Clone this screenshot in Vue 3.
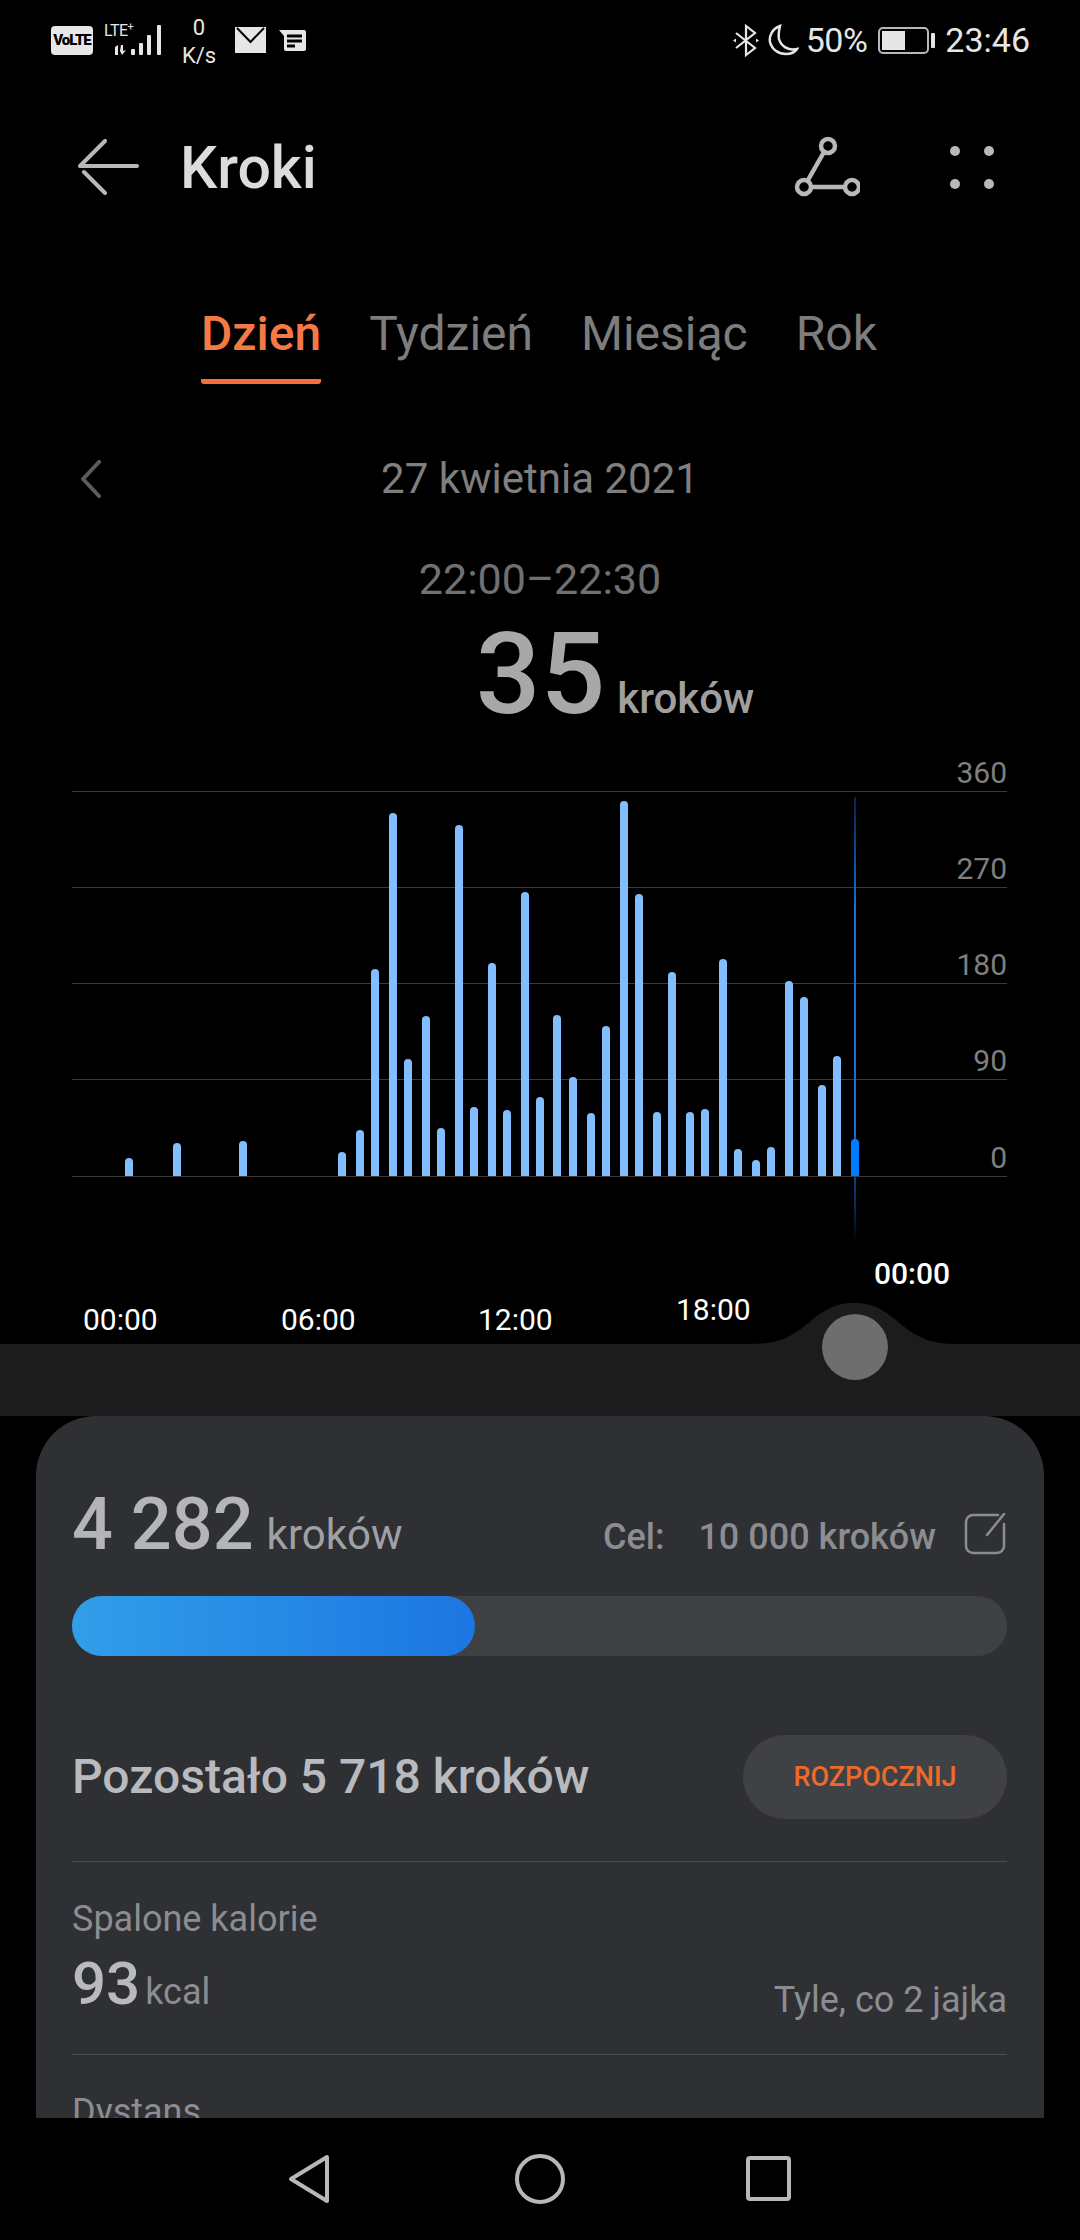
<script setup>
const tabs = ['Dzień', 'Tydzień', 'Miesiąc', 'Rok']

const bars = [
  [129, 18], [177, 33], [243, 35], [342, 24], [360, 46], [375, 207], [393, 363],
  [408, 117], [426, 160], [441, 48], [459, 351], [474, 69], [492, 213], [507, 66],
  [525, 284], [540, 79], [557, 161], [573, 99], [591, 63], [606, 150], [624, 375],
  [639, 282], [657, 64], [672, 204], [690, 64], [705, 67], [723, 217], [738, 27],
  [756, 16], [771, 29], [789, 195], [804, 179], [822, 91], [837, 120],
]

const yLabels = [
  { text: '360', top: 0 },
  { text: '270', top: 96 },
  { text: '180', top: 192 },
  { text: '90', top: 288 },
  { text: '0', top: 385 },
]

const xLabels = [
  { text: '00:00', left: 83, top: 511 },
  { text: '06:00', left: 281, top: 511 },
  { text: '12:00', left: 478, top: 511 },
  { text: '18:00', left: 676, top: 501 },
]
</script>

<template>
  <div class="phone">
    <!-- Status bar -->
    <div class="status">
      <div class="status-left">
        <span class="volte">VoLTE</span>
        <div class="signal">
          <span class="lte">LTE<sup>+</sup></span>
          <svg width="60" height="32" viewBox="0 0 60 32" class="signal-svg">
            <g fill="#e6e6e6">
              <path d="M11 23l3-2v10h-3z" />
              <path d="M17 21h2v6l3-1-4 5-2-4z" />
              <rect x="27" y="25" width="4" height="6" rx="1" />
              <rect x="35" y="19" width="4" height="12" rx="1" />
              <rect x="43" y="11" width="4" height="20" rx="1" />
              <rect x="53" y="1" width="4" height="30" rx="1" />
            </g>
          </svg>
        </div>
        <div class="speed"><span>0</span><span>K/s</span></div>
        <svg width="31" height="26" viewBox="0 0 31 26" class="mail">
          <path fill="#e6e6e6" d="M0 0h31v26H0z" />
          <path fill="none" stroke="#000" stroke-width="2" d="M2 1l13.500 14L29 1" />
        </svg>
        <svg width="28" height="23" viewBox="0 0 28 23" class="msg">
          <path fill="#e6e6e6" d="M0 1h25a2 2 0 0 1 2 2v17a2 2 0 0 1-2 2H7a2 2 0 0 1-2-2V7z" />
          <path stroke="#000" stroke-width="3" d="M8 7h15M8 12h15M8 17h8" />
        </svg>
      </div>
      <div class="status-right">
        <svg width="26" height="33" viewBox="0 0 26 33" fill="none" stroke="#e6e6e6" stroke-width="2.200">
          <path d="M3 9l19 15-9 7V2l9 7L3 24" />
          <path d="M0 16.500l3-2v4zM26 16.500l-3-2v4z" fill="#e6e6e6" stroke="none" />
        </svg>
        <svg width="31" height="32" viewBox="0 0 31 32" class="moon">
          <path fill="none" stroke="#e6e6e6" stroke-width="2.500" d="M12 2C4 5 1 12 2 18c2 8 9 12 16 12 5 0 9-2 11-5-9 2-16-3-18-10-1-5 0-9 1-13z" />
        </svg>
        <span class="pct">50%</span>
        <div class="battery">
          <div class="battery-body"><div class="battery-fill"></div></div>
          <div class="battery-tip"></div>
        </div>
        <span class="time">23:46</span>
      </div>
    </div>

    <!-- App bar -->
    <header class="appbar">
      <svg width="62" height="56" viewBox="0 0 62 56" fill="none" stroke="#b8b8b8" stroke-width="4" stroke-linecap="round" stroke-linejoin="round">
        <path d="M2 27h57M2 27L27 2M6 33l21 21" />
      </svg>
      <h1 class="title">Kroki</h1>
      <svg width="68" height="62" viewBox="0 0 68 62" fill="none" stroke="#b8b8b8" stroke-width="4.500">
        <circle cx="36" cy="10" r="7" />
        <circle cx="12" cy="51" r="7" />
        <circle cx="60" cy="51" r="7" />
        <path d="M32 16L16 44M19 51h34" />
      </svg>
      <div class="more">
        <i></i><i></i><i></i><i></i>
      </div>
    </header>

    <!-- Tabs -->
    <nav class="tabs">
      <div v-for="(t, i) in tabs" :key="t" class="tab" :class="{ active: i === 0 }">{{ t }}</div>
    </nav>

    <!-- Date -->
    <div class="date-row">
      <svg class="date-prev" width="22" height="38" viewBox="0 0 22 38" fill="none" stroke="#5c5c5c" stroke-width="4" stroke-linecap="round" stroke-linejoin="round">
        <path d="M19 2L3 19l16 17" />
      </svg>
      <span>27 kwietnia 2021</span>
    </div>
    <div class="range">22:00–22:30</div>
    <div class="reading"><span class="reading-num">35</span><span class="reading-unit">kroków</span></div>

    <!-- Chart -->
    <section class="chart">
      <div v-for="y in yLabels" :key="y.text" class="grid-line" :style="{ top: y.top + 'px' }"></div>
      <span v-for="y in yLabels" :key="'l' + y.text" class="y-label" :style="{ top: y.top - 36 + 'px' }">{{ y.text }}</span>
      <div class="cursor"></div>
      <div
        v-for="b in bars"
        :key="b[0]"
        class="bar"
        :style="{ left: b[0] - 3.75 + 'px', height: b[1] + 'px' }"
      ></div>
      <div class="bar bar-current"></div>
      <span
        v-for="x in xLabels"
        :key="x.left"
        class="x-label"
        :style="{ left: x.left + 'px', top: x.top + 'px' }"
      >{{ x.text }}</span>
      <span class="x-label x-current">00:00</span>
      <svg class="bump" width="208" height="41" viewBox="0 0 208 41">
        <path fill="#1c1c1c" d="M0 41C30 41 42 34 62 17 80 2 92 0 104 0s24 2 42 17c20 17 32 24 62 24z" />
      </svg>
      <div class="thumb"></div>
    </section>
    <div class="band"></div>

    <!-- Summary card -->
    <main class="viewport">
      <div class="card">
        <div class="totals">
          <span class="total-num">4 282</span>
          <span class="total-unit">kroków</span>
          <span class="goal">Cel:</span>
          <span class="goal goal-value">10 000 kroków</span>
          <svg width="42" height="42" viewBox="0 0 42 42" fill="none" stroke="#8c8d90" stroke-width="2.500" stroke-linecap="round">
            <path d="M34 2H9a7 7 0 0 0-7 7v24a7 7 0 0 0 7 7h24a7 7 0 0 0 7-7V11" />
            <path d="M40 1L23 22" />
          </svg>
        </div>
        <div class="progress"><div class="progress-fill"></div></div>
        <div class="remaining">
          <span>Pozostało 5 718 kroków</span>
          <button class="start">ROZPOCZNIJ</button>
        </div>
        <div class="stat">
          <div class="stat-label">Spalone kalorie</div>
          <div class="stat-row">
            <span class="stat-num">93</span>
            <span class="stat-unit">kcal</span>
            <span class="stat-note">Tyle, co 2 jajka</span>
          </div>
        </div>
        <div class="stat">
          <div class="stat-label">Dystans</div>
        </div>
      </div>
    </main>

    <!-- Navigation bar -->
    <footer class="navbar">
      <svg width="42" height="50" viewBox="0 0 42 50" fill="none" stroke="#b8b8b8" stroke-width="4" stroke-linejoin="round">
        <path d="M39 3v44L3 25z" />
      </svg>
      <svg width="50" height="50" viewBox="0 0 50 50" fill="none" stroke="#b8b8b8" stroke-width="4">
        <circle cx="25" cy="25" r="23" />
      </svg>
      <svg width="46" height="46" viewBox="0 0 46 46" fill="none" stroke="#b8b8b8" stroke-width="4" stroke-linejoin="round">
        <rect x="2" y="2" width="41" height="41" rx="2" />
      </svg>
    </footer>
  </div>
</template>

<style scoped>
.phone {
  width: 1080px;
  height: 2240px;
  background: #000;
  display: flex;
  flex-direction: column;
  overflow: hidden;
  font-family: Roboto, "Liberation Sans", sans-serif;
  color: #b8b8b8;
}

/* status bar */
.status {
  height: 80px;
  flex-shrink: 0;
  display: flex;
  justify-content: space-between;
  align-items: center;
  padding: 0 50px 0 51px;
  color: #e6e6e6;
}
.status-left,
.status-right {
  display: flex;
  align-items: center;
}
.volte {
  width: 42px;
  height: 29px;
  border-radius: 4px;
  background: #e6e6e6;
  color: #000;
  font-size: 15px;
  font-weight: 900;
  line-height: 29px;
  text-align: center;
  letter-spacing: -1px;
}
.signal {
  position: relative;
  width: 60px;
  height: 32px;
  margin-left: 11px;
}
.signal-svg {
  display: block;
}
.lte {
  position: absolute;
  left: 0;
  top: -2px;
  font-size: 16px;
  line-height: 18px;
  letter-spacing: -0.5px;
}
.lte sup {
  font-size: 11px;
  line-height: 0;
}
.speed {
  width: 36px;
  margin-left: 17px;
  margin-top: 3px;
  display: flex;
  flex-direction: column;
  align-items: center;
  font-size: 22px;
  line-height: 28px;
}
.mail {
  margin-left: 18px;
}
.msg {
  margin-left: 13px;
}
.moon {
  margin-left: 9px;
}
.pct {
  margin-left: 7px;
  font-size: 34px;
  letter-spacing: -0.5px;
}
.battery {
  display: flex;
  align-items: center;
  margin-left: 11px;
  margin-right: 10px;
}
.battery-body {
  width: 51px;
  height: 27px;
  box-sizing: border-box;
  border: 2px solid #b8b8b8;
  border-radius: 5px;
  padding: 2px;
}
.battery-fill {
  width: 23px;
  height: 100%;
  background: #e6e6e6;
}
.battery-tip {
  width: 4px;
  height: 15px;
  margin-left: 2px;
  background: #e6e6e6;
  border-radius: 1px;
}
.time {
  font-size: 34px;
}

/* app bar */
.appbar {
  height: 86px;
  margin-top: 44px;
  flex-shrink: 0;
  display: flex;
  align-items: center;
  padding: 0 86px 0 78px;
}
.title {
  margin: 0 0 0 40px;
  flex: 1;
  font-size: 59px;
  font-weight: 500;
  color: #dcdcdc;
}
.more {
  margin-left: 90px;
  width: 44px;
  display: grid;
  grid-template-columns: 10px 10px;
  justify-content: space-between;
  row-gap: 23px;
}
.more i {
  width: 10px;
  height: 10px;
  border-radius: 50%;
  background: #b8b8b8;
}

/* tabs */
.tabs {
  display: flex;
  gap: 48px;
  margin-top: 90px;
  padding-left: 201px;
  flex-shrink: 0;
}
.tab {
  height: 84px;
  box-sizing: border-box;
  padding-top: 7px;
  font-size: 48px;
  font-weight: 400;
  line-height: 54px;
  color: #7d7d7d;
}
.tab.active {
  font-weight: 500;
  color: #f47a45;
  border-bottom: 5px solid #f4703a;
  border-radius: 0 0 3px 3px;
}

/* date */
.date-row {
  position: relative;
  margin-top: 70px;
  text-align: center;
  font-size: 42px;
  line-height: 50px;
  color: #7f7f7f;
  flex-shrink: 0;
}
.date-prev {
  position: absolute;
  left: 80px;
  top: 6px;
}
.range {
  margin-top: 52px;
  text-align: center;
  font-size: 43px;
  line-height: 46px;
  color: #707070;
  flex-shrink: 0;
}
.reading {
  display: flex;
  justify-content: center;
  align-items: baseline;
  gap: 12px;
  margin-top: 16px;
  height: 173px;
  padding-left: 150px;
  box-sizing: border-box;
  flex-shrink: 0;
}
.reading-num {
  font-size: 114px;
  font-weight: 500;
  line-height: 112px;
  color: #a8a8a8;
}
.reading-unit {
  font-size: 42px;
  font-weight: 500;
  color: #a0a0a0;
}

/* chart */
.chart {
  position: relative;
  height: 553px;
  flex-shrink: 0;
}
.grid-line {
  position: absolute;
  left: 72px;
  width: 935px;
  height: 1px;
  background: #3a3a3a;
}
.y-label {
  position: absolute;
  right: 73px;
  font-size: 30px;
  line-height: 36px;
  color: #7f7f7f;
}
.bar {
  position: absolute;
  bottom: 168px;
  width: 7.5px;
  background: #82bdff;
  border-radius: 4px 4px 0 0;
}
.bar-current {
  left: 851px;
  width: 8px;
  height: 37px;
  background: #007dff;
}
.cursor {
  position: absolute;
  left: 854px;
  top: 6px;
  width: 2px;
  height: 445px;
  background: linear-gradient(to bottom, #06254a 0%, #1a6fd4 25%, #1a6fd4 75%, #06254a 93%, #000 100%);
}
.x-label {
  position: absolute;
  font-size: 30px;
  line-height: 36px;
  color: #fff;
}
.x-current {
  left: 874px;
  top: 465px;
  font-weight: 500;
}
.bump {
  position: absolute;
  left: 750px;
  bottom: 0;
}
.thumb {
  position: absolute;
  left: 822px;
  top: 523px;
  width: 66px;
  height: 66px;
  border-radius: 50%;
  background: #6e6e6e;
  z-index: 1;
}
.band {
  height: 72px;
  background: #1c1c1c;
  flex-shrink: 0;
}

/* card */
.viewport {
  flex: 1;
  min-height: 0;
  overflow: hidden;
  padding: 0 36px;
}
.card {
  background: #2f3034;
  border-radius: 60px 60px 0 0;
  padding: 0 37px 0 36px;
  height: 900px;
}
.totals {
  display: flex;
  align-items: baseline;
  height: 180px;
  box-sizing: border-box;
  padding-top: 67px;
}
.total-num {
  font-size: 72px;
  font-weight: 500;
  line-height: 84px;
  color: #b4b5b8;
}
.total-unit {
  flex: 1;
  margin-left: 13px;
  font-size: 42px;
  color: #a0a1a4;
}
.goal {
  font-size: 36px;
  font-weight: 500;
  color: #8c8d90;
}
.goal-value {
  margin-left: 34px;
  margin-right: 28px;
}
.totals svg {
  align-self: flex-end;
  margin-bottom: 41px;
  margin-right: 1px;
}
.progress {
  height: 60px;
  border-radius: 30px;
  background: #3f4044;
}
.progress-fill {
  width: 403px;
  height: 100%;
  border-radius: 30px;
  background: linear-gradient(to right, #319ee9, #1c76e2);
}
.remaining {
  display: flex;
  justify-content: space-between;
  align-items: center;
  height: 205px;
  box-sizing: border-box;
  padding-top: 36px;
  font-size: 48px;
  font-weight: 500;
  color: #b9babd;
}
.start {
  width: 264px;
  height: 84px;
  border: 0;
  border-radius: 42px;
  background: #404145;
  color: #ed6a2b;
  font-family: inherit;
  font-size: 27px;
  font-weight: 500;
}
.stat {
  border-top: 1px solid #4c4d51;
  height: 193px;
  box-sizing: border-box;
  padding-top: 37px;
}
.stat-label {
  font-size: 36px;
  line-height: 40px;
  color: #8c8d90;
}
.stat-row {
  display: flex;
  align-items: baseline;
  margin-top: 10px;
}
.stat-num {
  font-size: 60px;
  font-weight: 500;
  line-height: 70px;
  color: #b9babd;
}
.stat-unit {
  flex: 1;
  margin-left: 5px;
  font-size: 36px;
  color: #8c8d90;
}
.stat-note {
  font-size: 36px;
  color: #8c8d90;
  transform: translateY(8px);
}

/* bottom nav */
.navbar {
  height: 122px;
  flex-shrink: 0;
  background: #000;
  display: flex;
  justify-content: center;
  align-items: center;
}
.navbar svg:nth-child(2) {
  margin: 0 181px 0 185px;
}
</style>

<style>
html,
body {
  background: #000;
}
</style>
